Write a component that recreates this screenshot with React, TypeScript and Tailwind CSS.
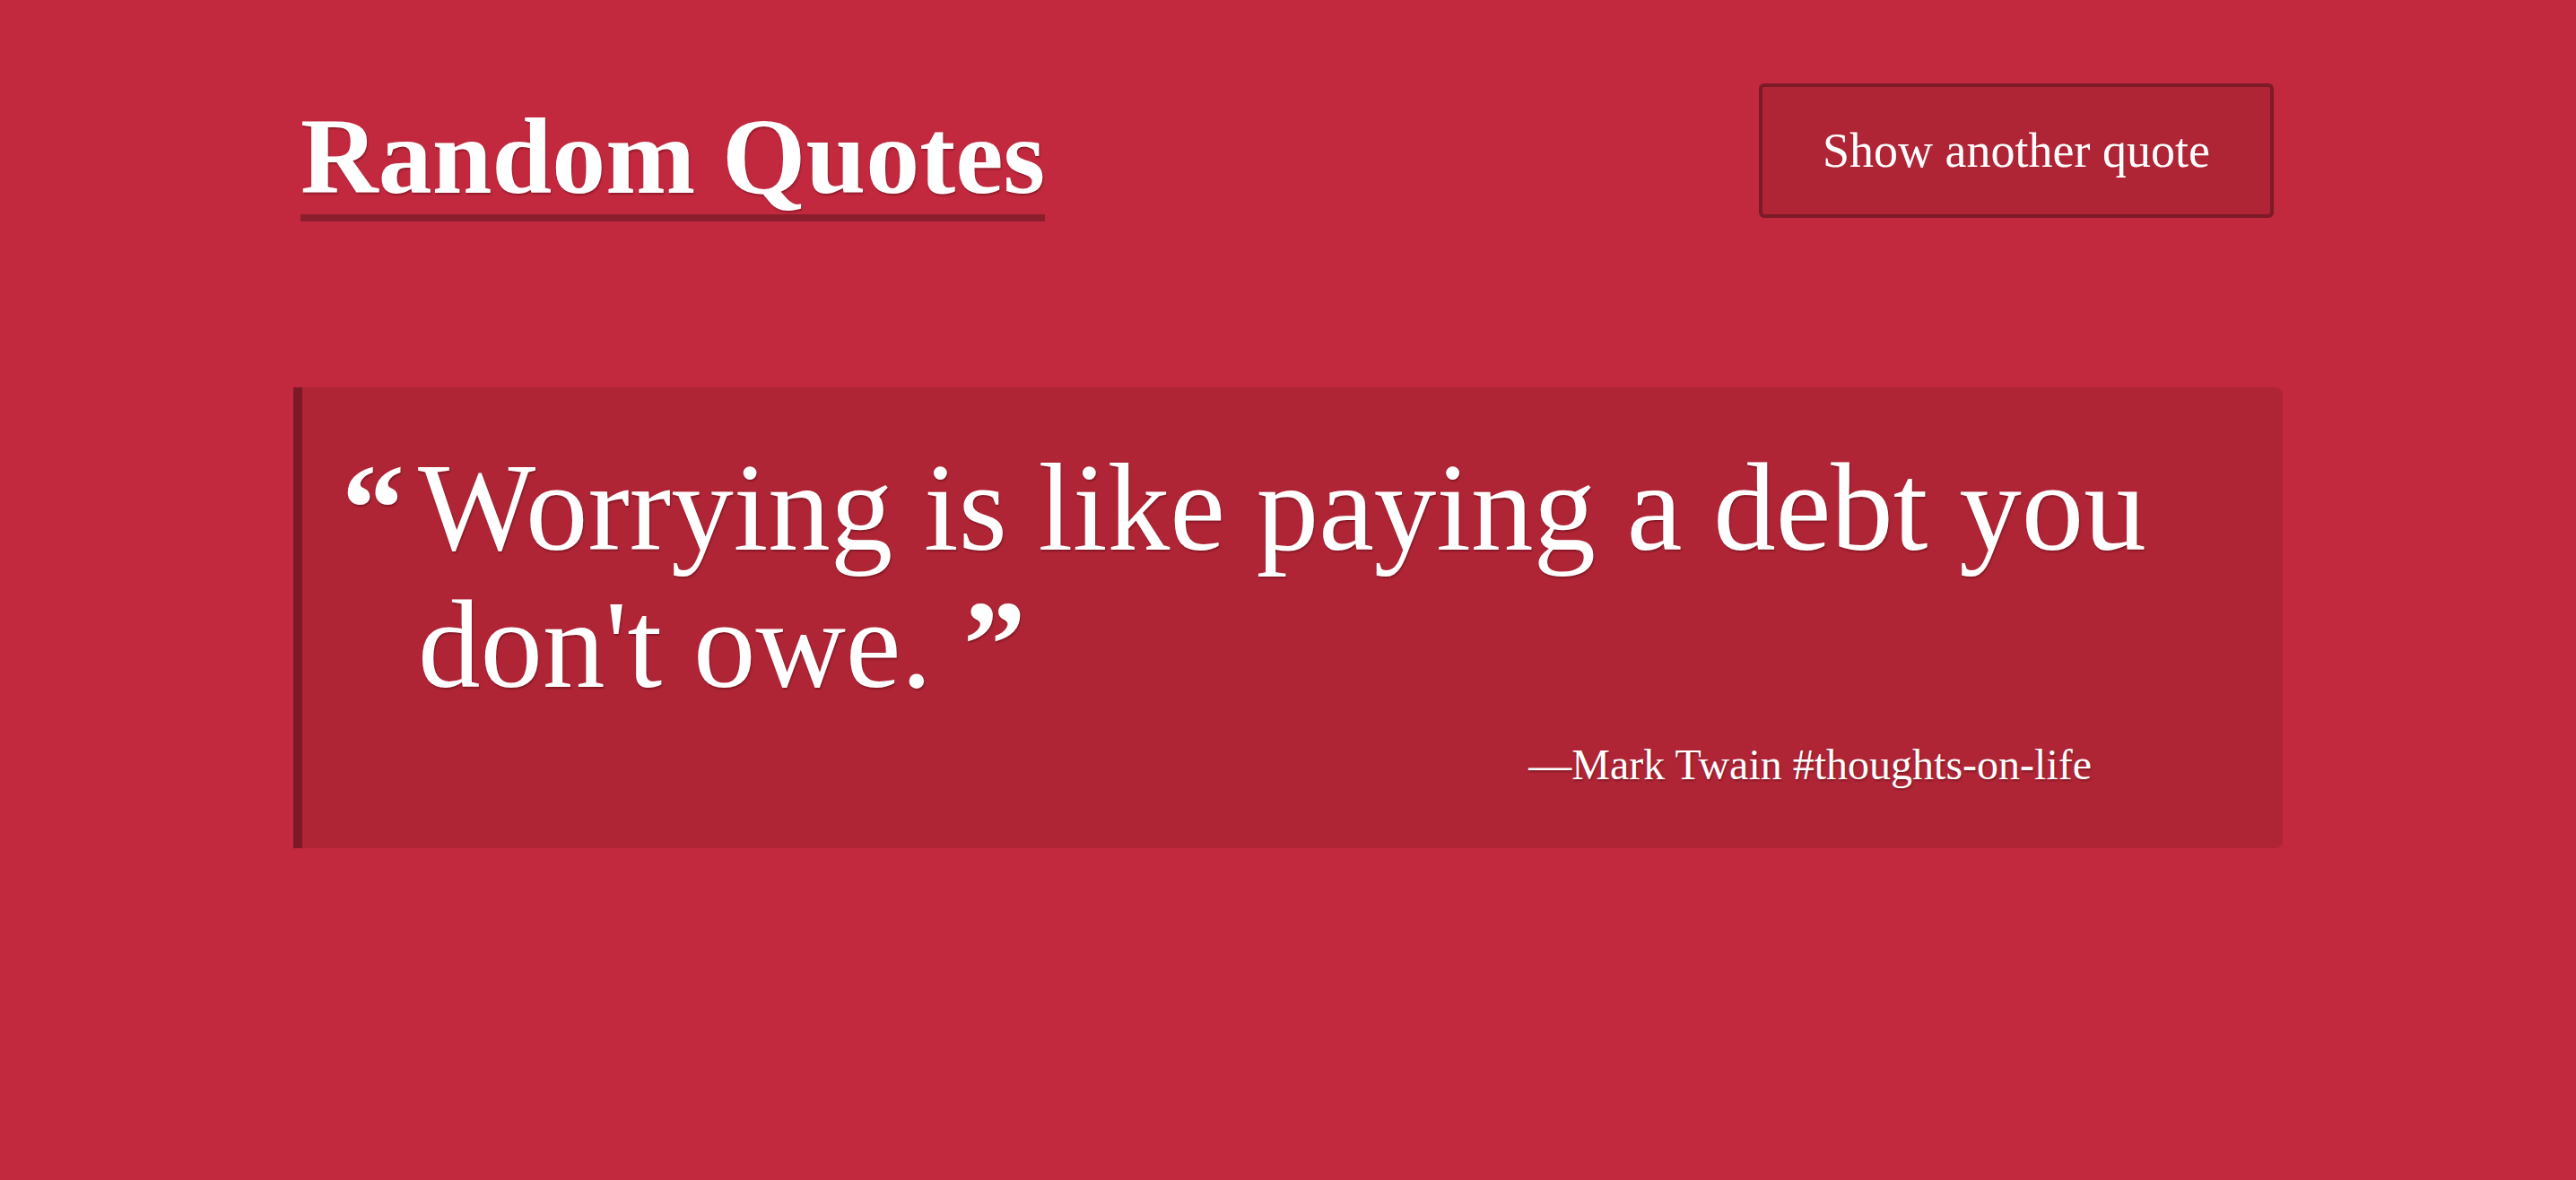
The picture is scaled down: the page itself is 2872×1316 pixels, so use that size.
import React from 'react';

const quote = {
  text: "Worrying is like paying a debt you don't owe.",
  author: 'Mark Twain',
  tag: 'thoughts-on-life',
};

const App: React.FC = () => {
  return (
    <div className="min-h-[1316px] w-full bg-[#c2293e] font-['Liberation_Serif',serif] text-white [text-shadow:1px_2px_2px_rgba(60,0,10,0.35)]">
      <div className="mx-auto w-[2218px]">
        {/* Header */}
        <div className="flex items-start justify-between pl-[8px] pr-[10px] pt-[93px]">
          <h1 className="mt-[22px] border-b-8 border-[#8a1e2d] pb-[4px] text-[120px] font-bold leading-none">
            Random Quotes
          </h1>
          <button className="h-[150px] w-[574px] rounded-md border-4 border-[#7d1a27] bg-[#af2536] text-[54px] leading-none text-white">
            Show another quote
          </button>
        </div>

        {/* Quote card */}
        <div className="mt-[185px] rounded-r-lg border-l-[10px] border-[#7b1a26] bg-[#af2536] pb-[64px] pl-[44px] pr-[60px] pt-[58px]">
          <div className="flex">
            <span className="w-[85px] shrink-0 text-[140px] font-bold leading-[153px]">&ldquo;</span>
            <p className="text-[139px] leading-[153px]">
              {quote.text} <span className="font-bold">&rdquo;</span>
            </p>
          </div>
          <div className="mt-[28px] flex justify-end pr-[153px]">
            <p className="text-[48px] leading-[1.2]">
              &mdash;{quote.author} #{quote.tag}
            </p>
          </div>
        </div>
      </div>
    </div>
  );
};

export default App;
